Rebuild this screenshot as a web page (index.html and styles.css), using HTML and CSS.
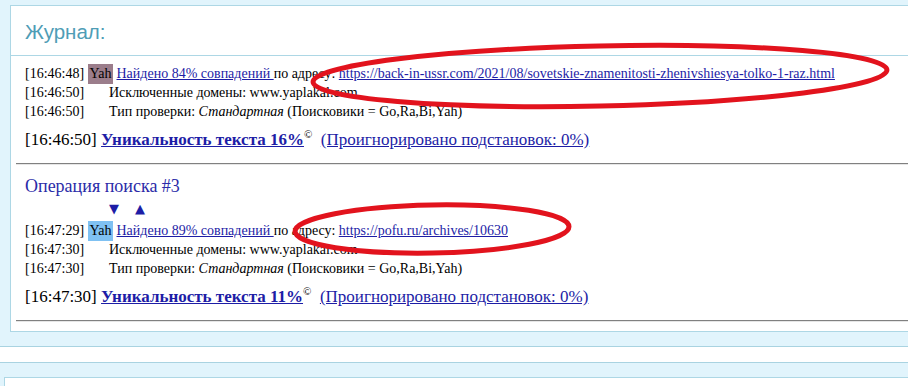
FILE: index.html
```html
<!DOCTYPE html>
<html lang="ru">
<head>
    <meta charset="UTF-8">
    <title>Журнал</title>
    <link rel="stylesheet" href="styles.css">
</head>
<body>
    <div class="area">
        <div class="panel">
            <div class="panel-head">Журнал:</div>
            <div class="log">
                <div class="row"><span class="ts">[16:46:48]</span><span class="engine yah-a">Yah</span> <a href="#" class="hit">Найдено 84% совпадений </a>по адресу: <a href="#">https://back-in-ussr.com/2021/08/sovetskie-znamenitosti-zhenivshiesya-tolko-1-raz.html</a></div>
                <div class="row"><span class="ts">[16:46:50]</span><span class="gap"></span>Исключенные домены: www.yaplakal.com</div>
                <div class="row"><span class="ts">[16:46:50]</span><span class="gap"></span>Тип проверки: <i>Стандартная</i> (Поисковики = Go,Ra,Bi,Yah)</div>
                <div class="result">[16:46:50] <a href="#" class="uniq">Уникальность текста 16%</a><sup>©</sup> &nbsp;<a href="#">(Проигнорировано подстановок: 0%)</a></div>
                <hr>

                <div class="op-title">Операция поиска #3</div>
                <div class="arrows"><span>▼</span><span>▲</span></div>
                <div class="row"><span class="ts">[16:47:29]</span><span class="engine yah-b">Yah</span> <a href="#" class="hit">Найдено 89% совпадений </a>по адресу: <a href="#">https://pofu.ru/archives/10630</a></div>
                <div class="row"><span class="ts">[16:47:30]</span><span class="gap"></span>Исключенные домены: www.yaplakal.com</div>
                <div class="row"><span class="ts">[16:47:30]</span><span class="gap"></span>Тип проверки: <i>Стандартная</i> (Поисковики = Go,Ra,Bi,Yah)</div>
                <div class="result">[16:47:30] <a href="#" class="uniq">Уникальность текста 11%</a><sup>©</sup> &nbsp;<a href="#">(Проигнорировано подстановок: 0%)</a></div>
                <hr>
            </div>
        </div>
    </div>

    <div class="area area-next">
        <div class="panel panel-next"></div>
    </div>

    <!-- red marks drawn over the screenshot -->
    <svg class="marks" width="908" height="387" viewBox="0 0 908 387">
        <ellipse cx="600" cy="76" rx="287" ry="30" transform="rotate(-1.2 600 76)"></ellipse>
        <ellipse cx="432" cy="229" rx="137" ry="24" transform="rotate(-1 432 229)"></ellipse>
    </svg>
</body>
</html>
```

FILE: styles.css
```css
html, body {
    margin: 0;
    padding: 0;
    background: #fff;
    overflow: hidden;
    height: 387px;
}

body {
    position: relative;
    font-family: "Liberation Serif", "Times New Roman", serif;
    font-size: 14px;
    color: #000;
}

a {
    color: #1d1da6;
}

/* blue outer blocks */
.area {
    background: #e1f4fc;
    padding: 5px 0 14px 10px;
    margin-right: -30px;
    border-bottom: 1px solid #a9d3e1;
}

.area-next {
    margin-top: 15px;
    border-top: 1px solid #a9d3e1;
    border-bottom: 0;
    padding: 14px 0 0 4px;
}

.panel {
    background: #fff;
    border: 1px solid #add7e5;
}

.panel-next {
    height: 8px;
    border-bottom: 0;
}

.panel-head {
    height: 49px;
    line-height: 52px;
    padding-left: 14px;
    border-bottom: 1px solid #add7e5;
    font-family: "Liberation Sans", Arial, sans-serif;
    font-size: 20.5px;
    color: #4f9db6;
}

.log {
    padding: 8px 0 9px 9px;
}

.row {
    height: 19px;
    line-height: 19px;
    padding-left: 5px;
    white-space: nowrap;
}

.ts {
    display: inline-block;
    width: 63px;
}

.gap {
    display: inline-block;
    width: 21px;
}

.engine {
    display: inline-block;
    width: 25px;
    height: 20px;
    line-height: 20px;
    text-align: center;
    vertical-align: top;
}

.yah-a {
    background: #9b7d8b;
}

.yah-b {
    background: #7fc1f2;
}

.result {
    padding-left: 5px;
    margin-top: 7px;
    height: 24px;
    line-height: 24px;
    font-size: 17px;
    white-space: nowrap;
}

.uniq {
    font-weight: bold;
}

.result sup {
    font-size: 11px;
    vertical-align: 7px;
    line-height: 0;
}

hr {
    margin: 11px 0 0 -4px;
    border: 0;
    border-top: 1px solid #808080;
    border-bottom: 1px solid #e6e6e6;
    height: 0;
}

.op-title {
    padding-left: 5px;
    margin-top: 10px;
    line-height: 22px;
    font-size: 18px;
    color: #2b2ba8;
}

.arrows {
    padding-left: 89px;
    height: 24px;
    line-height: 24px;
    font-family: "DejaVu Sans", sans-serif;
    font-size: 13px;
    color: #1d1da6;
}

.arrows span {
    margin-right: 16px;
}

.marks {
    position: absolute;
    left: 0;
    top: 0;
    pointer-events: none;
}

.marks ellipse {
    fill: none;
    stroke: #e2131d;
    stroke-width: 5;
}
```
